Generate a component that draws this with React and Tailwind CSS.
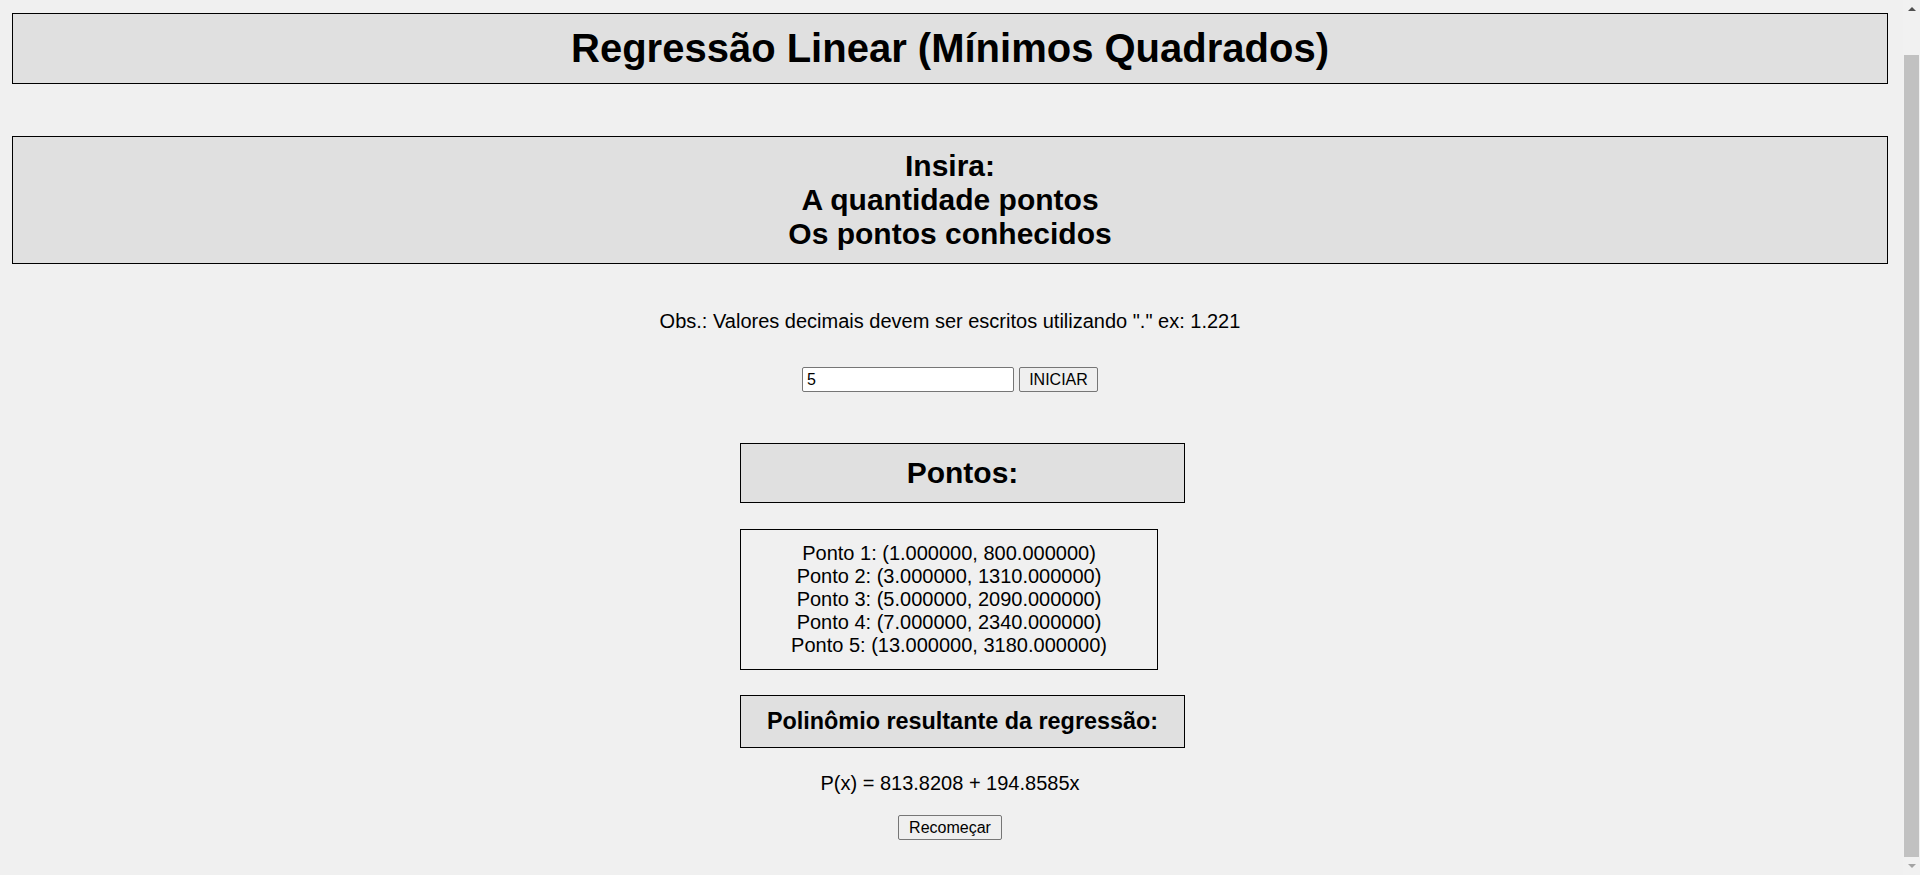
const pontos = [
  [1, 800],
  [3, 1310],
  [5, 2090],
  [7, 2340],
  [13, 3180],
]

function Caixa({ className = '', children }) {
  return (
    <div className={`border border-black bg-[#e0e0e0] py-[12px] text-center font-bold ${className}`}>
      {children}
    </div>
  )
}

function Scrollbar() {
  return (
    <div className="w-[17px] h-full flex flex-col bg-[#f1f1f1] shrink-0">
      <div className="h-[17px] flex items-center justify-center">
        <div className="w-0 h-0 border-x-[4px] border-x-transparent border-b-[4px] border-b-[#505050]" />
      </div>
      <div className="mt-[38px] h-[802px] mx-px bg-[#c1c1c1]" />
      <div className="flex-1 flex items-center justify-center">
        <div className="w-0 h-0 border-x-[4px] border-x-transparent border-t-[4px] border-t-[#a3a3a3]" />
      </div>
    </div>
  )
}

export default function App() {
  return (
    <div className="h-[875px] w-full flex overflow-hidden bg-[#f0f0f0] text-black font-['Liberation_Sans',Arial,sans-serif]">
      <div className="flex-1 flex flex-col pl-[12px] pr-[15px] pt-[13px]">
        {/* Titulo */}
        <Caixa className="text-[40px] leading-[45px]">
          Regressão Linear (Mínimos Quadrados)
        </Caixa>

        <Caixa className="mt-[52px] text-[30px] leading-[34px]">
          Insira:<br />
          A quantidade pontos<br />
          Os pontos conhecidos
        </Caixa>

        <p className="mt-[46px] text-center text-[20px] leading-[23px]">
          Obs.: Valores decimais devem ser escritos utilizando "." ex: 1.221
        </p>

        <div className="mt-[34px] flex justify-center items-center gap-[5px]">
          <input
            type="text"
            defaultValue="5"
            className="w-[212px] h-[25px] bg-white border border-[#767676] rounded-[2px] px-[4px] text-[16px] outline-none"
          />
          <button className="w-[79px] h-[25px] bg-[#efefef] border border-[#767676] rounded-[2px] text-[16px] leading-none">
            INICIAR
          </button>
        </div>

        {/* Resultado */}
        <div className="mt-[51px] ml-[728px] flex flex-col items-start">
          <Caixa className="w-[445px] text-[30px] leading-[34px]">Pontos:</Caixa>

          <div className="mt-[26px] w-[418px] border border-black py-[12px] text-center text-[20px] leading-[23px]">
            {pontos.map(([x, y], i) => (
              <div key={i}>
                Ponto {i + 1}: ({x.toFixed(6)}, {y.toFixed(6)})
              </div>
            ))}
          </div>

          <Caixa className="mt-[25px] w-[445px] text-[23.4px] leading-[27px]">
            Polinômio resultante da regressão:
          </Caixa>
        </div>

        <p className="mt-[24px] text-center text-[20px] leading-[23px]">
          P(x) = 813.8208 + 194.8585x
        </p>

        <div className="mt-[20px] flex justify-center">
          <button className="w-[104px] h-[25px] bg-[#efefef] border border-[#767676] rounded-[2px] text-[16px] leading-none">
            Recomeçar
          </button>
        </div>
      </div>
      <Scrollbar />
    </div>
  )
}
